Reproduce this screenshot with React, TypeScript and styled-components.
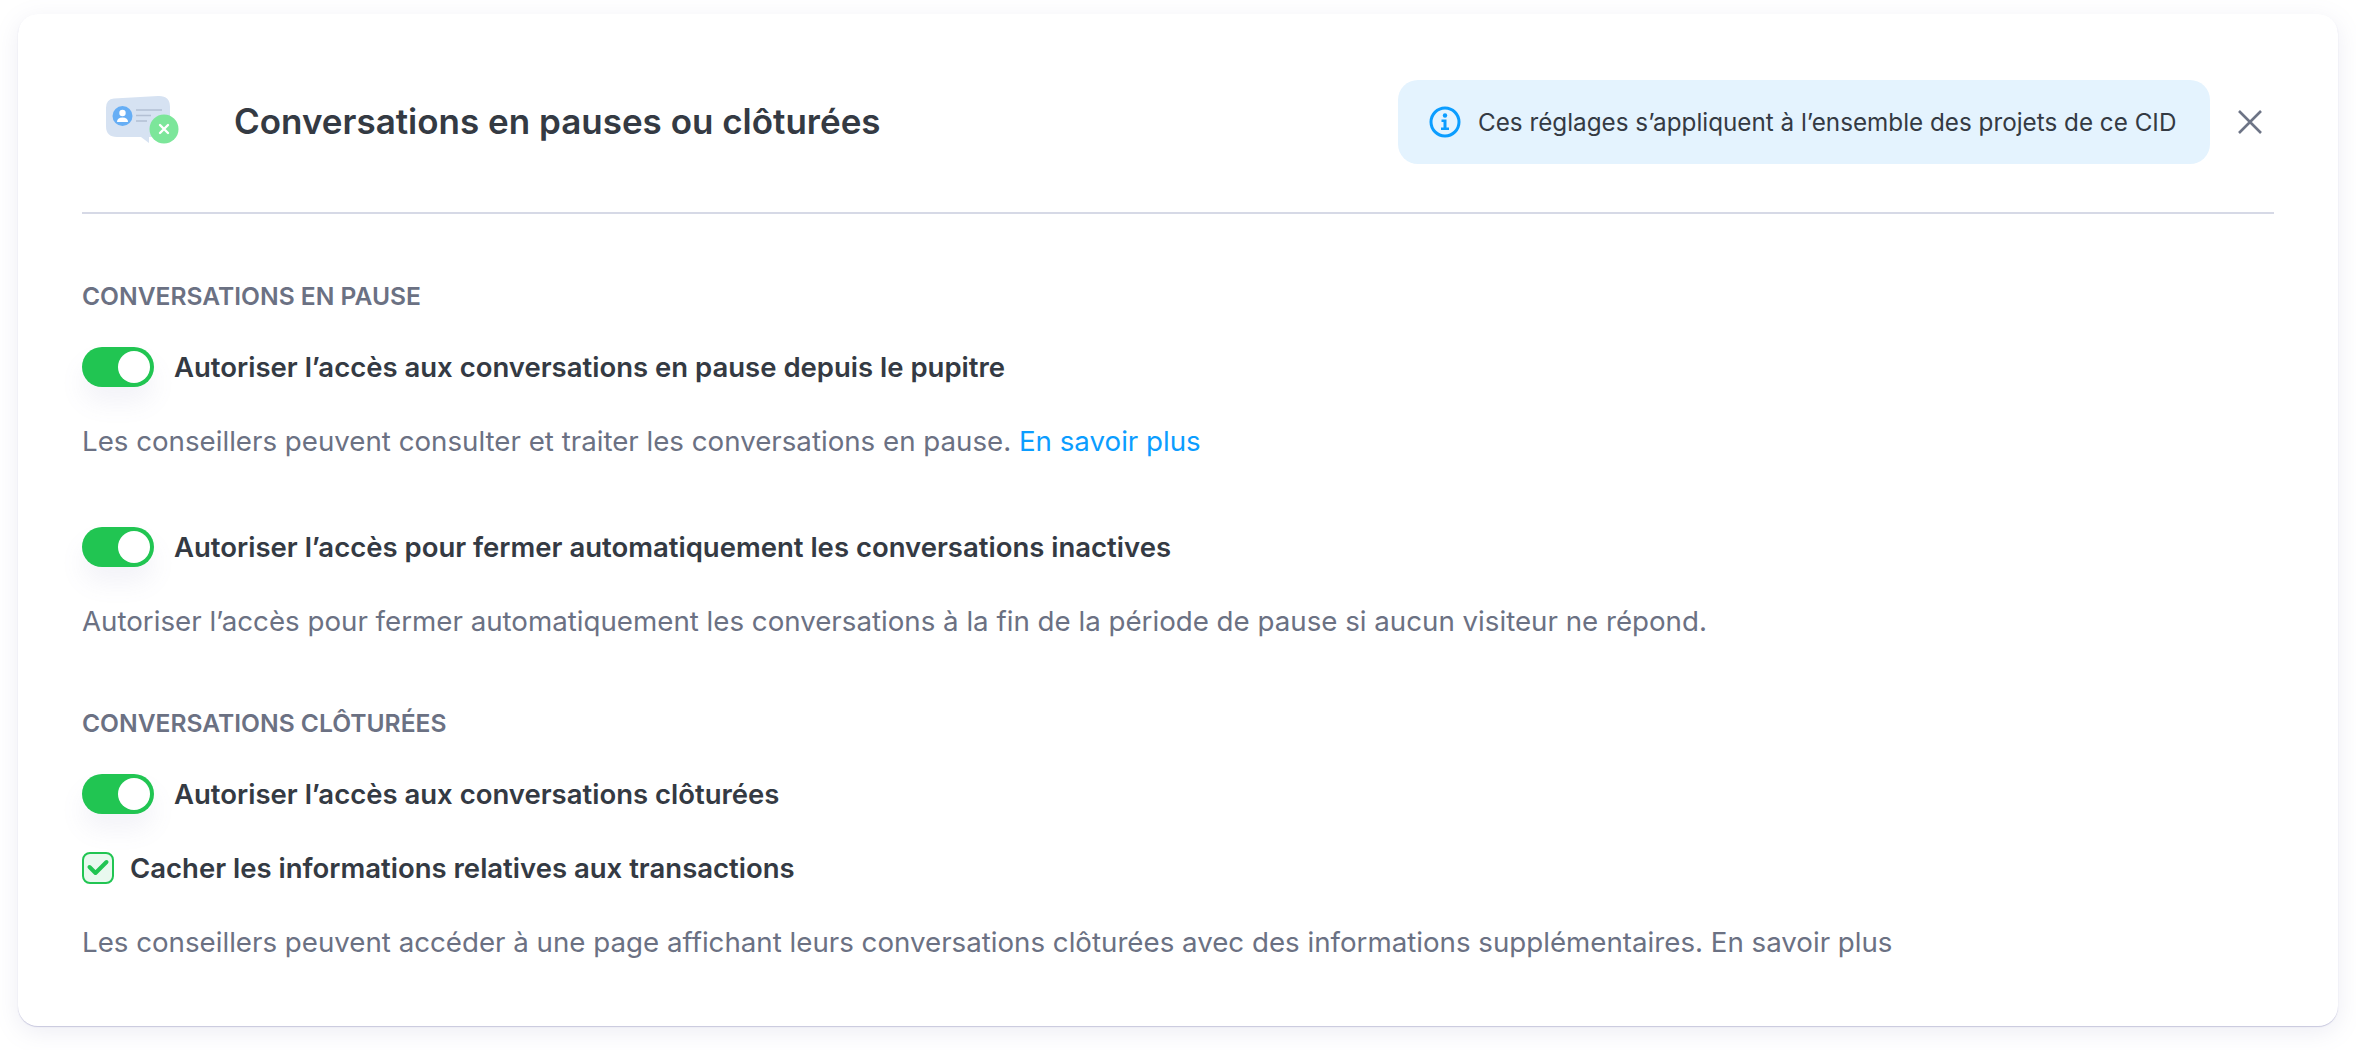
import React from 'react';
import styled, { createGlobalStyle } from 'styled-components';

const GlobalStyle = createGlobalStyle`
  html, body {
    margin: 0;
    padding: 0;
    background: #fff;
  }
  body {
    font-family: 'Inter', 'Liberation Sans', sans-serif;
    color: #343a43;
  }
`;

const ConversationIcon = () => (
  <svg width="80" height="60" viewBox="0 2 80 60">
    <path
      d="M14 8.5 L58 6 Q70 5.500 70 17 V36 Q70 47 58 47 H49 V53 L41 47 H17 Q6 47 6 36 V18 Q6 9 14 8.500 Z"
      fill="#d6e2f2"
    />
    <circle cx="22.500" cy="26" r="10" fill="#66aef5" />
    <circle cx="22.500" cy="23" r="3.200" fill="#fff" />
    <path d="M17 32 Q17 27.500 22.500 27.500 Q28 27.500 28 32 Z" fill="#fff" />
    <path d="M36 20 H62 M36 25.500 H51 M36 31 H47" stroke="#b3c0d4" strokeWidth="1.600" />
    <circle cx="64" cy="39" r="14.500" fill="#7ce69a" />
    <path d="M60 35 L68 43 M68 35 L60 43" stroke="#fff" strokeWidth="2.400" strokeLinecap="round" />
  </svg>
);

const InfoIcon = () => (
  <svg width="32" height="32" viewBox="0 0 32 32">
    <circle cx="16" cy="16" r="14" fill="none" stroke="#0b9dff" strokeWidth="3" />
    <circle cx="16" cy="9.500" r="2.200" fill="#0b9dff" />
    <path d="M12.500 13.500 H17.500 V21.500 H20 V24 H12 V21.500 H14.500 V16 H12.500 Z" fill="#0b9dff" />
  </svg>
);

const CloseIcon = () => (
  <svg width="26" height="26" viewBox="0 0 26 26">
    <path d="M2 2 L24 24 M24 2 L2 24" stroke="#6d7486" strokeWidth="2.600" />
  </svg>
);

const CheckIcon = () => (
  <svg width="24" height="20" viewBox="0 0 24 20">
    <path d="M3.500 9 L9.500 15 L20.500 4" fill="none" stroke="#21c552" strokeWidth="4" strokeLinecap="round" strokeLinejoin="round" />
  </svg>
);

const Page = styled.div`
  padding: 14px 18px 24px;
`;

const Card = styled.div`
  box-sizing: border-box;
  width: 2320px;
  height: 1012px;
  padding: 66px 64px 0;
  background: #fff;
  border-radius: 20px;
  box-shadow: 0 1px 1px rgba(170, 170, 205, 0.6), 0 6px 24px rgba(130, 130, 180, 0.14);
`;

const Header = styled.header`
  display: flex;
  align-items: center;
  height: 84px;
  padding-bottom: 48px;
  border-bottom: 2px solid #d6d9e6;
`;

const LogoBox = styled.div`
  display: flex;
  width: 152px;
  padding-left: 18px;
  box-sizing: border-box;
`;

const Title = styled.h1`
  flex: 1;
  margin: 0 0 2px;
  font-size: 35px;
  font-weight: 600;
  line-height: 44px;
  color: #343a43;
`;

const InfoBox = styled.div`
  display: flex;
  align-items: center;
  gap: 17px;
  box-sizing: border-box;
  width: 812px;
  height: 84px;
  padding-left: 31px;
  background: #e4f3fe;
  border-radius: 20px;
  font-size: 24.260px;
  color: #343a43;
`;

const CloseButton = styled.button`
  display: flex;
  margin-left: 27px;
  margin-right: 11px;
  padding: 0;
  border: none;
  background: none;
`;

const SectionTitle = styled.h2<{ $top: number }>`
  margin: ${p => p.$top}px 0 0;
  font-size: 24.600px;
  line-height: 30px;
  font-weight: 600;
  text-transform: uppercase;
  color: #6b7183;
`;

const Row = styled.div<{ $top: number }>`
  display: flex;
  align-items: center;
  margin-top: ${p => p.$top}px;
`;

const Toggle = styled.div`
  display: flex;
  justify-content: flex-end;
  align-items: center;
  box-sizing: border-box;
  width: 72px;
  height: 40px;
  padding-right: 4px;
  margin-right: 20px;
  background: #21c552;
  border-radius: 20px;
  box-shadow: 0 16px 24px rgba(120, 120, 180, 0.09);
`;

const Knob = styled.span`
  width: 32px;
  height: 32px;
  border-radius: 50%;
  background: #fff;
`;

const Checkbox = styled.div`
  display: flex;
  align-items: center;
  justify-content: center;
  box-sizing: border-box;
  width: 32px;
  height: 32px;
  margin-right: 16px;
  background: #e9f9ef;
  border: 2px solid #21c552;
  border-radius: 8px;
`;

const Label = styled.span`
  font-size: 27.500px;
  font-weight: 600;
  line-height: 40px;
  color: #343a43;
`;

const Description = styled.p<{ $top: number }>`
  margin: ${p => p.$top}px 0 0;
  font-size: 27.700px;
  line-height: 36px;
  color: #6b7183;
`;

const Link = styled.a`
  color: #0b9dff;
`;

export default function App() {
  return (
    <Page>
      <GlobalStyle />
      <Card>
        <Header>
          <LogoBox>
            <ConversationIcon />
          </LogoBox>
          <Title>Conversations en pauses ou clôturées</Title>
          <InfoBox>
            <InfoIcon />
            Ces réglages s’appliquent à l’ensemble des projets de ce CID
          </InfoBox>
          <CloseButton>
            <CloseIcon />
          </CloseButton>
        </Header>

        <SectionTitle $top={67}>Conversations en pause</SectionTitle>
        <Row $top={36}>
          <Toggle><Knob /></Toggle>
          <Label>Autoriser l’accès aux conversations en pause depuis le pupitre</Label>
        </Row>
        <Description $top={36}>
          Les conseillers peuvent consulter et traiter les conversations en pause. <Link>En savoir plus</Link>
        </Description>
        <Row $top={68}>
          <Toggle><Knob /></Toggle>
          <Label>Autoriser l’accès pour fermer automatiquement les conversations inactives</Label>
        </Row>
        <Description $top={36}>
          Autoriser l’accès pour fermer automatiquement les conversations à la fin de la période de pause si aucun visiteur ne répond.
        </Description>

        <SectionTitle $top={69}>Conversations clôturées</SectionTitle>
        <Row $top={36}>
          <Toggle><Knob /></Toggle>
          <Label>Autoriser l’accès aux conversations clôturées</Label>
        </Row>
        <Row $top={34}>
          <Checkbox><CheckIcon /></Checkbox>
          <Label>Cacher les informations relatives aux transactions</Label>
        </Row>
        <Description $top={36}>
          Les conseillers peuvent accéder à une page affichant leurs conversations clôturées avec des informations supplémentaires. En savoir plus
        </Description>
      </Card>
    </Page>
  );
}
